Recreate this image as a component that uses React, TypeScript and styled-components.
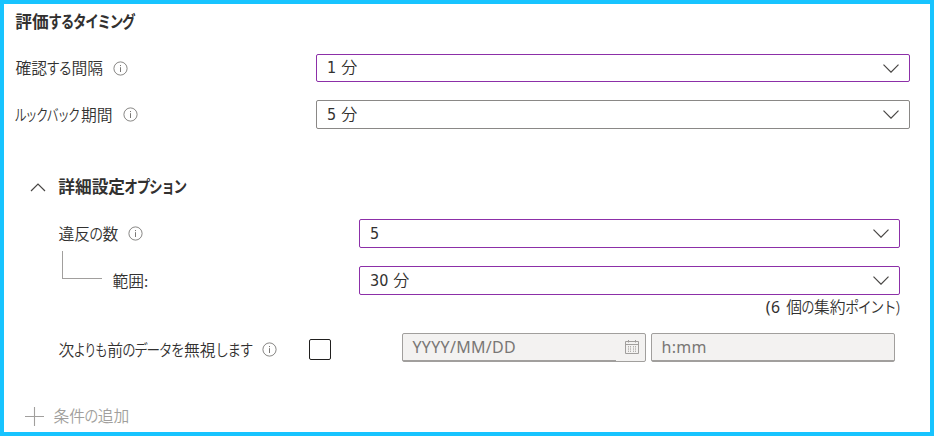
import React from "react";
import styled, { createGlobalStyle } from "styled-components";

const GlobalStyle = createGlobalStyle`
  *, *::before, *::after { box-sizing: border-box; }
  body { margin: 0; background: #fff; }
`;

const Panel = styled.main`
  width: 934px;
  height: 436px;
  padding: 5px 0 0 12px;
  border: 4px solid #18c4ff;
  background: #fff;
  color: #323130;
  font: 350 15.8px/20px "Noto Sans", "Noto Sans CJK JP", sans-serif;
  white-space: pre;
  overflow: hidden;
`;

const Row = styled.div<{ $top: number; $h?: number; $indent?: number }>`
  display: flex;
  align-items: center;
  height: ${(p) => p.$h ?? 29}px;
  margin-top: ${(p) => p.$top}px;
  padding-left: ${(p) => p.$indent ?? 0}px;
`;

const Label = styled.div<{ $w?: number; $gap?: number; $shift?: number }>`
  display: flex;
  flex: none;
  align-items: center;
  gap: ${(p) => p.$gap ?? 10}px;
  width: ${(p) => (p.$w ? `${p.$w}px` : "auto")};
  padding-top: ${(p) => p.$shift ?? 0}px;
`;

const Text = styled.span`
  display: inline-flex;
  margin-left: -0.6px;
  font-family: "Noto Sans CJK JP", sans-serif;
`;

const Title = styled.h2`
  display: inline-flex;
  margin: -2px 0 0 -0.7px;
  font: 700 16.7px/20px "Noto Sans CJK JP", sans-serif;
`;

/* Narrow kana, as in a UI typeface: each run is condensed to its set width. */
const Run = styled.span<{ $w: number; $n: number; $size?: number }>`
  display: inline-block;
  width: ${(p) => p.$w}px;
  letter-spacing: -1.6px;
  text-indent: -0.8px;
  transform: scaleX(${(p) => p.$w / (p.$n * ((p.$size ?? 15.8) - 1.6))});
  transform-origin: left center;
`;

const Select = styled.div<{ $w: number; $h?: number; $color?: string }>`
  display: flex;
  flex: none;
  align-items: center;
  justify-content: space-between;
  width: ${(p) => p.$w}px;
  height: ${(p) => p.$h ?? 29}px;
  padding: 0 10px 0 10px;
  border: 1px solid ${(p) => p.$color ?? "#8c2fa8"};
  border-radius: 2px;
  font: 350 16px/20px "DejaVu Sans Condensed", "Noto Sans CJK JP", sans-serif;
`;

const Value = styled.span`
  display: inline-flex;
  align-items: baseline;
  gap: 5px;
`;

const Elbow = styled.div`
  width: 40px;
  height: 28px;
  margin: -32px 11px 0 3px;
  border: solid #a19f9d;
  border-width: 0 0 1px 1px;
`;

const Note = styled.div`
  display: flex;
  justify-content: flex-end;
  width: 884px;
  height: 20px;
  margin-top: 2px;
`;

const NoteCount = styled.span`
  margin-right: 6px;
  font-weight: 400;
  letter-spacing: 0.6px;
`;

const Checkbox = styled.div`
  width: 22px;
  height: 21px;
  margin: 3px 71px 0 0;
  border: 1px solid #201f1e;
  border-radius: 2px;
`;

const Field = styled.div`
  display: flex;
  width: 244px;
  height: 29px;
  margin-right: 5px;
  border: 1px solid #a19f9d;
  border-radius: 2px;
  background: #f3f2f1;
  color: #797775;
  font: 400 16px/26px "Noto Sans", sans-serif;
  letter-spacing: 0.3px;
`;

const FieldText = styled.div`
  flex: 1;
  padding-left: 9.5px;
  border-bottom: 1px solid #a19f9d;
`;

const FieldIcon = styled.div`
  display: flex;
  align-items: center;
  width: 29px;
  padding: 0 0 1px 9px;
`;

const Disabled = styled.div`
  display: flex;
  align-items: center;
  gap: 10px;
  color: #a19f9d;
`;

const Icon = styled.svg`
  display: block;
  flex: none;
  fill: none;
  stroke: currentColor;
`;

const Info = () => (
  <Icon width="15" height="15" viewBox="0 0 15 15" color="#6b6967">
    <circle cx="7.5" cy="7.5" r="6.6" strokeWidth="0.8" />
    <path d="M7.5 6.2V11M7.5 4V5.1" strokeWidth="0.9" />
  </Icon>
);

const Chevron = ({ up = false }: { up?: boolean }) => (
  <Icon width="16" height="9" viewBox="0 0 16 9" color="#484644">
    <path d={up ? "M1 8L8 1L15 8" : "M.5 .7L8 8.2L15.5 .7"} strokeWidth="1.2" />
  </Icon>
);

const Calendar = () => (
  <Icon width="14" height="14" viewBox="0 0 14 14" color="#a19f9d">
    <path d="M.5 1.5H13.5V13.5H.5ZM.5 4.5H13.5M3.5 0V2.5M10.5 0V2.5" />
    <path d="M3.5 6V12M5.5 6V12M8.5 6V12M10.5 6V12" strokeDasharray="1.5 .8" strokeWidth=".8" />
  </Icon>
);

const Plus = () => (
  <Icon width="19" height="19" viewBox="0 0 19 19">
    <path d="M9.5 0V19M0 9.5H19" strokeWidth="1.1" />
  </Icon>
);

export default function App() {
  return (
    <>
      <GlobalStyle />
      <Panel>
        <Row $top={3} $h={20}>
          <Title>評価<Run $n={7} $w={86} $size={16.7}>するタイミング</Run></Title>
        </Row>
        <Row $top={22} $h={28}>
          <Label $w={300}>
            <Text>確認<Run $n={2} $w={24.5}>する</Run>間隔</Text>
            <Info />
          </Label>
          <Select $w={594} $h={28}>
            <Value><span>1</span><span>分</span></Value>
            <Chevron />
          </Select>
        </Row>
        <Row $top={18}>
          <Label $w={300}>
            <Text><Run $n={6} $w={65.5}>ルックバック</Run>期間</Text>
            <Info />
          </Label>
          <Select $w={594} $color="#8a8886">
            <Value><span>5</span><span>分</span></Value>
            <Chevron />
          </Select>
        </Row>
        <Row $top={48} $h={20} $indent={14}>
          <Label $gap={13}>
            <Chevron up />
            <Title>詳細設定<Run $n={5} $w={61.5} $size={16.7}>オプション</Run></Title>
          </Label>
        </Row>
        <Row $top={22} $indent={43}>
          <Label $w={300}>
            <Text>違反<Run $n={1} $w={12.5}>の</Run>数</Text>
            <Info />
          </Label>
          <Select $w={541}>
            <Value>5</Value>
            <Chevron />
          </Select>
        </Row>
        <Row $top={18} $indent={43}>
          <Label $w={300} $gap={0}>
            <Elbow />
            <Text>範囲:</Text>
          </Label>
          <Select $w={541}>
            <Value><span>30</span><span>分</span></Value>
            <Chevron />
          </Select>
        </Row>
        <Note>
          <NoteCount>(6</NoteCount>
          <Text>個<Run $n={1} $w={12}>の</Run>集約<Run $n={4} $w={50}>ポイント</Run></Text>)
        </Note>
        <Row $top={16} $indent={43}>
          <Label $w={250} $shift={4}>
            <Text>
              次<Run $n={3} $w={33}>よりも</Run>前<Run $n={1} $w={12}>の</Run>
              <Run $n={4} $w={49}>データを</Run>無視<Run $n={3} $w={36.5}>します</Run>
            </Text>
            <Info />
          </Label>
          <Checkbox />
          <Field>
            <FieldText>YYYY/MM/DD</FieldText>
            <FieldIcon><Calendar /></FieldIcon>
          </Field>
          <Field><FieldText>h:mm</FieldText></Field>
        </Row>
        <Row $top={44} $h={20} $indent={9}>
          <Disabled>
            <Plus />
            <Text>条件<Run $n={1} $w={12.8}>の</Run>追加</Text>
          </Disabled>
        </Row>
      </Panel>
    </>
  );
}
